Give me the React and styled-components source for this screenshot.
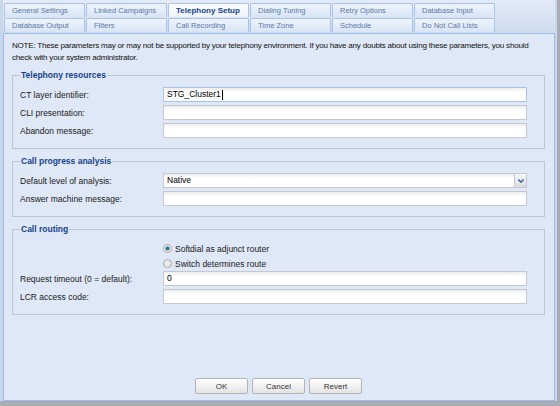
import React from "react";
import styled, { createGlobalStyle } from "styled-components";

const GlobalStyle = createGlobalStyle`
  html, body {
    margin: 0;
    padding: 0;
  }
  body {
    width: 560px;
    height: 406px;
    overflow: hidden;
    background: #a9adb3;
    font-family: "Liberation Sans", Arial, sans-serif;
  }
`;

const Screen = styled.div`
  width: 557px;
  height: 401px;
  box-sizing: border-box;
  padding: 0 2px 0 3px;
  background: #c9d7ea;
  display: flex;
  flex-direction: column;
`;

const TabStrip = styled.div`
  height: 33px;
  box-sizing: border-box;
  padding: 3px 0 0 1px;
  background: linear-gradient(#e3ebf7, #cddbef);
  display: grid;
  grid-template-columns: repeat(6, 81px);
  grid-auto-rows: 14px;
  column-gap: 1px;
  row-gap: 1px;
`;

const Tab = styled.div`
  box-sizing: border-box;
  border: 1px solid #a9c4e8;
  border-bottom: none;
  border-radius: 2px 2px 0 0;
  background: ${(p) =>
    p.active
      ? "linear-gradient(#fbfdff, #eef3fb)"
      : "linear-gradient(#edf3fb, #d9e5f5)"};
  color: ${(p) => (p.active ? "#15428b" : "#5b7aa8")};
  font-weight: ${(p) => (p.active ? "bold" : "normal")};
  font-size: ${(p) => (p.active ? "8px" : "7.5px")};
  line-height: 13px;
  padding-left: 7px;
  white-space: nowrap;
`;

const Panel = styled.div`
  flex: 1;
  background: #dfe8f6;
  border: 1px solid #99bbe8;
  display: flex;
  flex-direction: column;
  padding: 6px 9px 6px 8px;
`;

const Note = styled.div`
  font-size: 8px;
  letter-spacing: -0.2px;
  line-height: 12px;
  color: #111;
  margin-bottom: 5px;
`;

const FieldSet = styled.fieldset`
  margin: 0 0 6px 0;
  padding: 6px 17px 10px 7px;
  border: 1px solid #bfc6d3;
  display: flex;
  flex-direction: column;
  gap: 3px;
  min-width: 0;
`;

const Legend = styled.legend`
  padding: 0 1px;
  font-size: 8.5px;
  line-height: 12px;
  font-weight: bold;
  color: #15428b;
`;

const Row = styled.div`
  display: grid;
  grid-template-columns: 143px 1fr;
  align-items: center;
  height: 15px;
`;

const Label = styled.div`
  font-size: 8.5px;
  color: #1a1a1a;
  white-space: nowrap;
`;

const Field = styled.div`
  box-sizing: border-box;
  height: 15px;
  border: 1px solid ${(p) => (p.focused ? "#a6c3e8" : "#c3c8d3")};
  background: linear-gradient(#ececec, #ffffff 4px);
  font-size: 8.5px;
  line-height: 13px;
  color: #000;
  padding-left: 3px;
  display: flex;
  align-items: center;
`;

const Caret = styled.span`
  display: inline-block;
  width: 1px;
  height: 10px;
  background: #000;
  margin-left: 1px;
`;

const SelectBox = styled(Field)`
  padding-right: 0;
  justify-content: space-between;
`;

const Trigger = styled.div`
  width: 12px;
  height: 13px;
  box-sizing: border-box;
  border-left: 1px solid #c3c8d3;
  background: linear-gradient(#f6f6f6, #dcdcdc);
  display: flex;
  align-items: center;
  justify-content: center;
`;

const RadioGroup = styled.div`
  display: flex;
  flex-direction: column;
  margin-bottom: -3px;
`;

const RadioRow = styled.div`
  display: flex;
  align-items: center;
  height: 15px;
  padding-left: 143px;
  font-size: 8.5px;
  color: #1a1a1a;
  gap: 3px;
`;

const Spacer = styled.div`
  flex: 1;
`;

const ButtonBar = styled.div`
  display: flex;
  justify-content: center;
  gap: 4px;
`;

const Button = styled.button`
  width: 53px;
  height: 16px;
  box-sizing: border-box;
  border: 1px solid #b4b4b4;
  border-radius: 2px;
  background: linear-gradient(#ffffff, #f2f2f2 50%, #e2e2e2);
  font-family: "Liberation Sans", Arial, sans-serif;
  font-size: 8px;
  color: #333;
  padding: 0;
`;

const Radio = ({ checked }) => (
  <svg width="9" height="9" viewBox="0 0 9 9">
    <circle cx="4.5" cy="4.5" r="4" fill="#e8e8e8" stroke="#a8a8a8" strokeWidth="1" />
    {checked && <circle cx="4.5" cy="4.5" r="2" fill="#2a6b94" />}
  </svg>
);

const Chevron = () => (
  <svg width="6" height="4" viewBox="0 0 6 4">
    <path d="M0.5 0.6 L3 3.2 L5.5 0.6" fill="none" stroke="#3d67a8" strokeWidth="1.5" />
  </svg>
);

const tabs = [
  ["General Settings", "Linked Campaigns", "Telephony Setup", "Dialing Tuning", "Retry Options", "Database Input"],
  ["Database Output", "Filters", "Call Recording", "Time Zone", "Schedule", "Do Not Call Lists"],
];

export default function App() {
  return (
    <>
      <GlobalStyle />
      <Screen>
        <TabStrip>
          {tabs.flat().map((t) => (
            <Tab key={t} active={t === "Telephony Setup"}>
              {t}
            </Tab>
          ))}
        </TabStrip>
        <Panel>
          <Note>
            NOTE: These parameters may or may not be supported by your telephony environment. If you have any doubts about using these parameters, you should check with your system administrator.
          </Note>

          <FieldSet>
            <Legend>Telephony resources</Legend>
            <Row>
              <Label>CT layer identifier:</Label>
              <Field focused>
                STG_Cluster1
                <Caret />
              </Field>
            </Row>
            <Row>
              <Label>CLI presentation:</Label>
              <Field />
            </Row>
            <Row>
              <Label>Abandon message:</Label>
              <Field />
            </Row>
          </FieldSet>

          <FieldSet>
            <Legend>Call progress analysis</Legend>
            <Row>
              <Label>Default level of analysis:</Label>
              <SelectBox>
                Native
                <Trigger>
                  <Chevron />
                </Trigger>
              </SelectBox>
            </Row>
            <Row>
              <Label>Answer machine message:</Label>
              <Field />
            </Row>
          </FieldSet>

          <FieldSet>
            <Legend>Call routing</Legend>
            <RadioGroup>
              <RadioRow>
                <Radio checked />
                Softdial as adjunct router
              </RadioRow>
              <RadioRow>
                <Radio />
                Switch determines route
              </RadioRow>
            </RadioGroup>
            <Row>
              <Label>Request timeout (0 = default):</Label>
              <Field>0</Field>
            </Row>
            <Row>
              <Label>LCR access code:</Label>
              <Field />
            </Row>
          </FieldSet>

          <Spacer />
          <ButtonBar>
            <Button>OK</Button>
            <Button>Cancel</Button>
            <Button>Revert</Button>
          </ButtonBar>
        </Panel>
      </Screen>
    </>
  );
}
